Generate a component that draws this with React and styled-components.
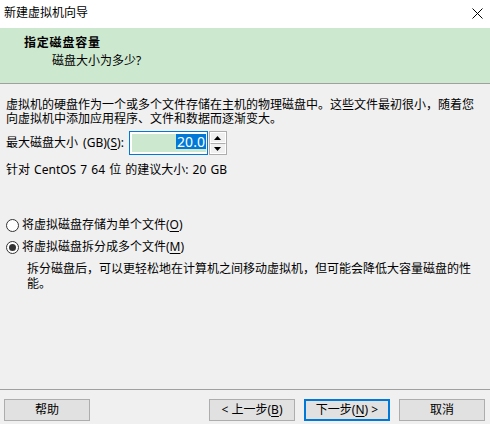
import React from "react";
import styled, { createGlobalStyle } from "styled-components";

const GlobalStyle = createGlobalStyle`
  body {
    margin: 0;
    background: #f0f0f0;
    font-family: "Noto Sans", "Noto Sans CJK SC", sans-serif;
    font-size: 12px;
    color: #000;
  }
`;

const Window = styled.div`
  width: 490px;
  height: 424px;
  display: flex;
  flex-direction: column;
  background: #f0f0f0;
  overflow: hidden;
`;

const TitleBar = styled.div`
  height: 28px;
  background: #fff;
  display: flex;
  align-items: center;
  justify-content: space-between;
  padding: 0 7px 2px 4px;
  box-sizing: border-box;
  line-height: 14px;
`;

const Header = styled.div`
  height: 56px;
  box-sizing: border-box;
  background: #cce8cf;
  border-bottom: 1px solid #a0a0a0;
  padding: 8px 0 0 24px;
  line-height: 14px;
`;

const HeaderTitle = styled.div`
  font-weight: 700;
  letter-spacing: 0.8px;
`;

const HeaderSub = styled.div`
  margin: 4px 0 0 28px;
`;

const Body = styled.div`
  flex: 1;
  padding: 14px 6px 0 6px;
  line-height: 14px;
`;

const Paragraph = styled.p`
  margin: 0;
  line-height: 14px;
`;

const SizeRow = styled.div`
  display: flex;
  align-items: center;
  gap: 5px;
  margin-top: 5px;
  height: 24px;
  word-spacing: 2px;
`;

const Spin = styled.div`
  display: flex;
  height: 24px;
`;

const SpinInput = styled.div`
  width: 79px;
  box-sizing: border-box;
  border: 1px solid #0078d7;
  background: #fff;
  padding: 2px 1px 2px 2px;
  display: flex;
`;

const SpinFill = styled.div`
  flex: 1;
  background: #cce8cf;
  display: flex;
  justify-content: flex-end;
`;

const Selected = styled.span`
  background: #0078d7;
  color: #fff;
  height: 15px;
  line-height: 15px;
  font-size: 14px;
  padding: 0 1px;
`;

const SpinButtons = styled.div`
  width: 18px;
  margin-left: 1px;
  border: 1px solid #adadad;
  box-sizing: border-box;
  display: flex;
  flex-direction: column;
  background: #fff;
`;

const SpinArrow = styled.div`
  flex: 1;
  display: flex;
  align-items: center;
  justify-content: center;
  background: #f0f0f0;
  border: 1px solid #fff;
  & + & {
    border-top: 1px solid #adadad;
  }
`;

const Recommend = styled.div`
  margin-top: 8px;
  word-spacing: 1px;
`;

const RadioGroup = styled.div`
  margin-top: 41px;
  display: flex;
  flex-direction: column;
  gap: 8px;
`;

const RadioRow = styled.label`
  display: flex;
  align-items: center;
  gap: 3px;
  height: 14px;
`;

const RadioCircle = styled.span`
  width: 13px;
  height: 13px;
  box-sizing: border-box;
  border: 1px solid #333;
  border-radius: 50%;
  background: #fff;
  display: flex;
  align-items: center;
  justify-content: center;
  &::after {
    content: "";
    width: 7px;
    height: 7px;
    border-radius: 50%;
    background: ${(p) => (p.$checked ? "#333" : "transparent")};
  }
`;

const Desc = styled.div`
  margin-top: 7px;
  padding-left: 21px;
  line-height: 15px;
`;

const U = styled.span`
  text-decoration: underline;
  text-underline-offset: 2px;
`;

const Footer = styled.div`
  border-top: 1px solid #a0a0a0;
  padding: 9px 5px 3px 4px;
  display: flex;
  align-items: center;
`;

const Button = styled.button`
  width: 86px;
  height: 22px;
  box-sizing: border-box;
  background: #e1e1e1;
  border: ${(p) => (p.$primary ? "2px solid #0078d7" : "1px solid #adadad")};
  font-family: inherit;
  font-size: 12px;
  color: #000;
  padding: 0;
  line-height: 14px;
  margin-left: ${(p) => p.$gap || 0}px;
`;

const Spacer = styled.div`
  flex: 1;
`;

export default function App() {
  return (
    <Window>
      <GlobalStyle />
      <TitleBar>
        <span>新建虚拟机向导</span>
        <svg width="11" height="11" viewBox="0 0 11 11">
          <path d="M0.5 0.5 L10.5 10.5 M10.5 0.5 L0.5 10.5" stroke="#000" strokeWidth="1" />
        </svg>
      </TitleBar>
      <Header>
        <HeaderTitle>指定磁盘容量</HeaderTitle>
        <HeaderSub>磁盘大小为多少?</HeaderSub>
      </Header>
      <Body>
        <Paragraph>
          虚拟机的硬盘作为一个或多个文件存储在主机的物理磁盘中。这些文件最初很小，随着您
          <br />
          向虚拟机中添加应用程序、文件和数据而逐渐变大。
        </Paragraph>
        <SizeRow>
          <span>
            最大磁盘大小 (GB)(<U>S</U>):
          </span>
          <Spin>
            <SpinInput>
              <SpinFill>
                <Selected>20.0</Selected>
              </SpinFill>
            </SpinInput>
            <SpinButtons>
              <SpinArrow>
                <svg width="7" height="4" viewBox="0 0 7 4">
                  <path d="M3.5 0 L7 4 L0 4 Z" fill="#000" />
                </svg>
              </SpinArrow>
              <SpinArrow>
                <svg width="7" height="4" viewBox="0 0 7 4">
                  <path d="M0 0 L7 0 L3.5 4 Z" fill="#000" />
                </svg>
              </SpinArrow>
            </SpinButtons>
          </Spin>
        </SizeRow>
        <Recommend>针对 CentOS 7 64 位 的建议大小: 20 GB</Recommend>
        <RadioGroup>
          <RadioRow>
            <RadioCircle />
            <span>
              将虚拟磁盘存储为单个文件(<U>O</U>)
            </span>
          </RadioRow>
          <RadioRow>
            <RadioCircle $checked />
            <span>
              将虚拟磁盘拆分成多个文件(<U>M</U>)
            </span>
          </RadioRow>
        </RadioGroup>
        <Desc>
          拆分磁盘后，可以更轻松地在计算机之间移动虚拟机，但可能会降低大容量磁盘的性
          <br />
          能。
        </Desc>
      </Body>
      <Footer>
        <Button>帮助</Button>
        <Spacer />
        <Button>
          &lt; 上一步(<U>B</U>)
        </Button>
        <Button $primary $gap={9}>
          下一步(<U>N</U>) &gt;
        </Button>
        <Button $gap={9}>取消</Button>
      </Footer>
    </Window>
  );
}
